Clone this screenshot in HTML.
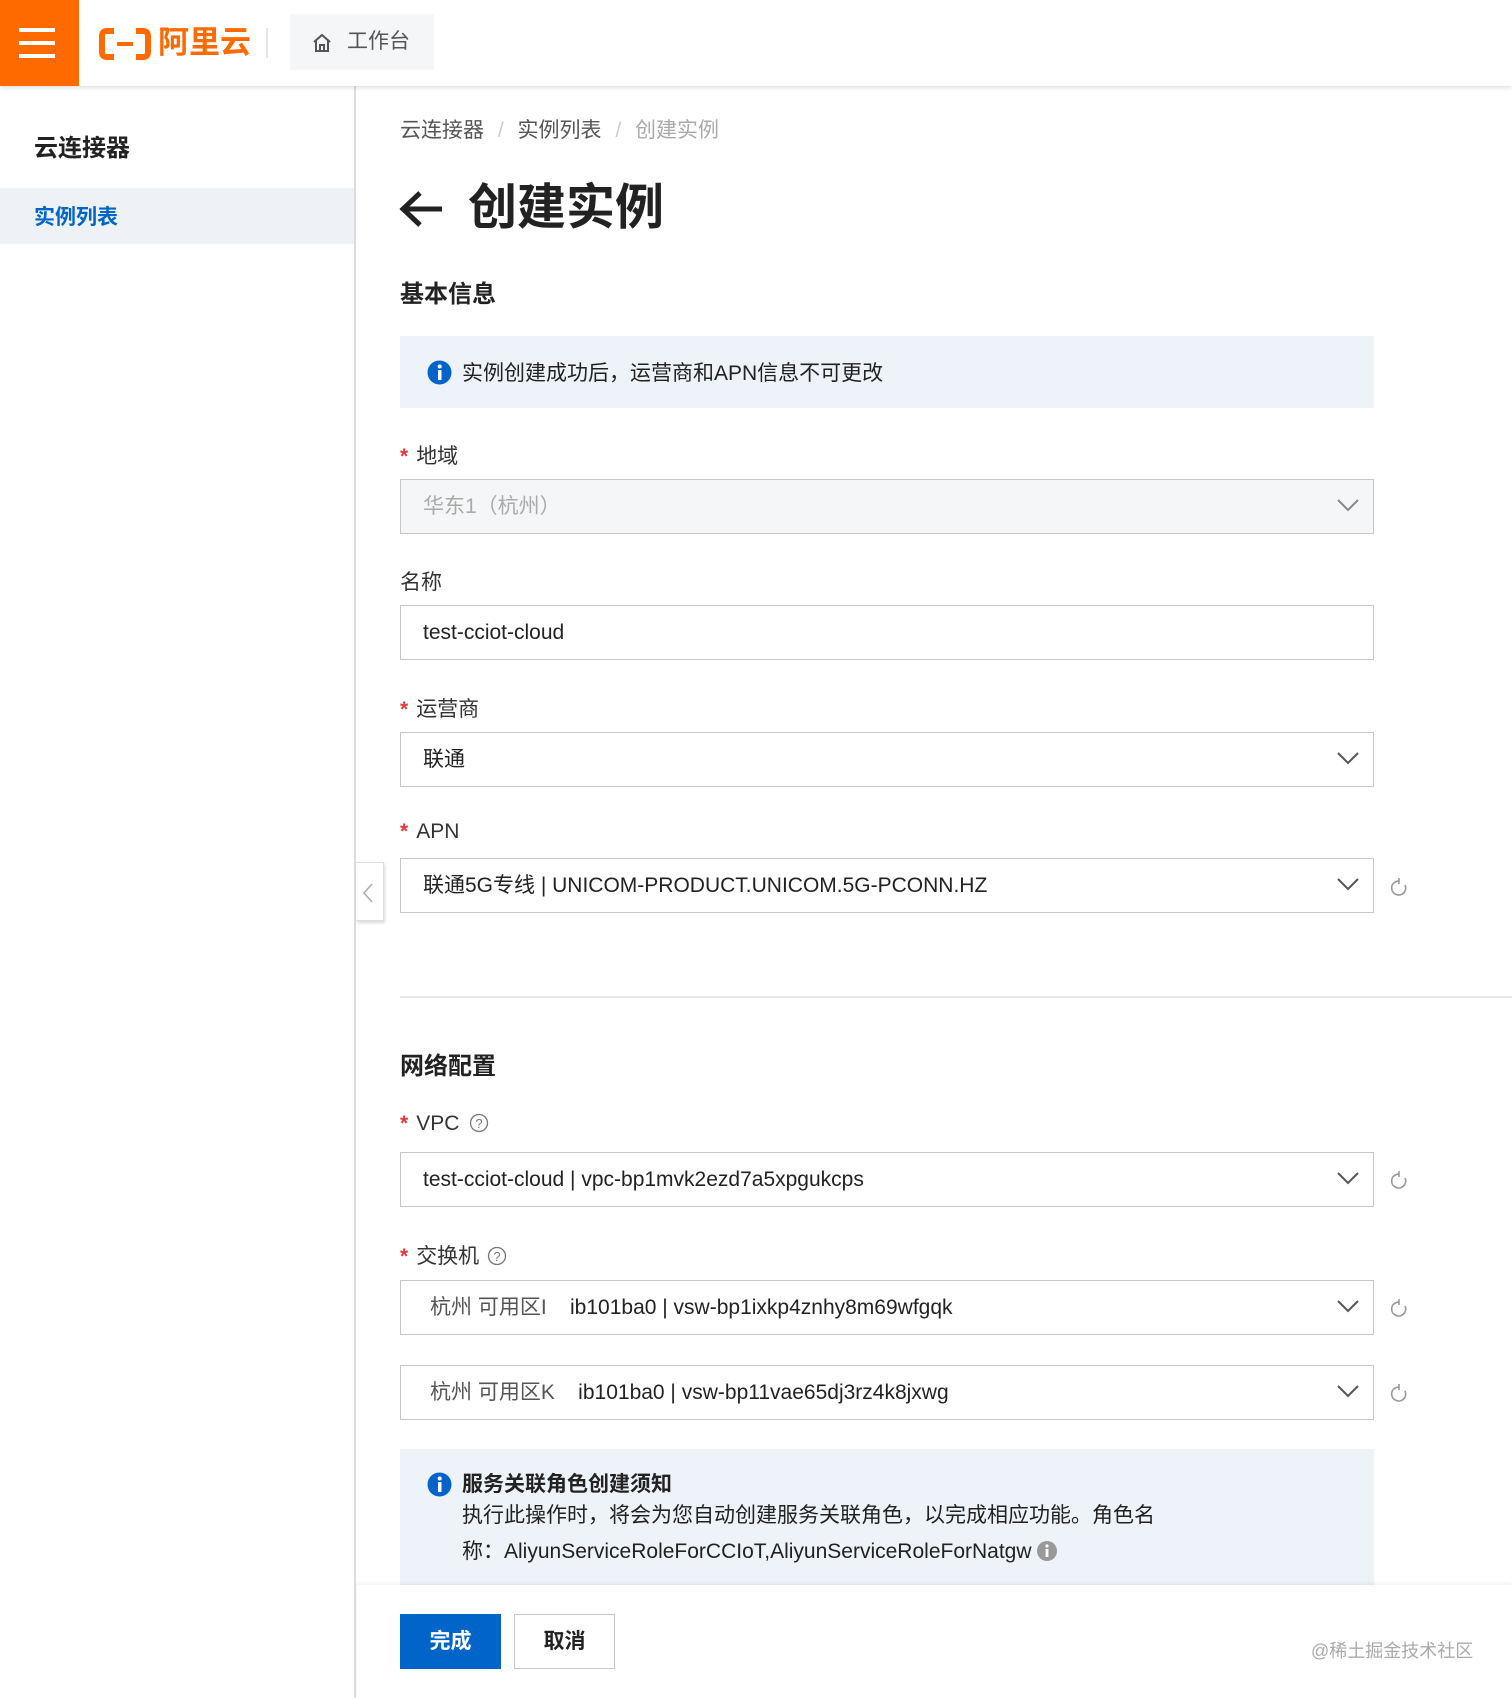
<!DOCTYPE html>
<html><head><meta charset="utf-8"><style>
*{margin:0;padding:0;box-sizing:border-box}
body{width:1512px;height:1698px;position:relative;overflow:hidden;background:#fff;font-family:"Liberation Sans","Noto Sans CJK SC",sans-serif;color:#333}
.a{position:absolute}
.hdr{left:0;top:0;width:1512px;height:86px;background:#fff;box-shadow:0 2px 4px rgba(0,0,0,.12);z-index:2}
.burg{left:0;top:0;width:79px;height:86px;background:#ff6a00}
.burg i{position:absolute;left:19px;width:36px;height:4px;background:#fff}
.side{left:0;top:86px;width:356px;height:1612px;border-right:2px solid #ddd}
.lbl{font-size:21px;color:#333;left:400px}
.lbl b{color:#e4393c;font-weight:bold;margin-right:8px}
.sel{left:400px;width:974px;height:55px;border:1px solid #c4c6cc;background:#fff;font-size:21px;line-height:53px;padding-left:22px;color:#222}
.sel svg{position:absolute;right:14px;top:18px}
.ref{left:1390px}
.h2{left:400px;font-size:24px;font-weight:bold;color:#222}
</style></head><body>
<div class="a hdr">
 <div class="a burg"><i style="top:28px"></i><i style="top:41px"></i><i style="top:54px"></i></div>
 <svg class="a" style="left:99px;top:28px" width="52" height="32" viewBox="0 0 52 32"><path d="M15 3H8Q3 3 3 8V24Q3 29 8 29H15M37 3H44Q49 3 49 8V24Q49 29 44 29H37" fill="none" stroke="#ff6a00" stroke-width="6"/><rect x="18" y="14" width="16" height="4" fill="#ff6a00"/></svg>
 <div class="a" style="left:158px;top:23px;font-size:31px;font-weight:bold;color:#ff6a00;line-height:40px">阿里云</div>
 <div class="a" style="left:266px;top:28px;width:2px;height:30px;background:#e5e5e5"></div>
 <div class="a" style="left:290px;top:14px;width:144px;height:56px;background:#f5f6f7"></div>
 <svg class="a" style="left:311px;top:32px" width="22" height="22" viewBox="0 0 22 22"><path d="M3 10L11 3L19 10M5 8V19H17V8M9 19V13H13V19" fill="none" stroke="#555" stroke-width="2"/></svg>
 <div class="a" style="left:347px;top:28px;font-size:21px;color:#555;line-height:28px">工作台</div>
</div>
<div class="a side">
 <div class="a" style="left:34px;top:42px;font-size:24px;font-weight:bold;color:#222">云连接器</div>
 <div class="a" style="left:0;top:102px;width:354px;height:56px;background:#eef2f7"></div>
 <div class="a" style="left:34px;top:115px;font-size:21px;font-weight:bold;color:#0064c8">实例列表</div>
</div>
<div class="a" style="left:356px;top:862px;width:28px;height:59px;background:#fff;border:1px solid #ddd;border-left:none;box-shadow:1px 2px 3px rgba(0,0,0,.15)"><svg class="a" style="left:6px;top:20px" width="12" height="20"><path d="M10 1L2 10L10 19" fill="none" stroke="#aaa" stroke-width="1.5"/></svg></div>
<div class="a" style="left:400px;top:114px;font-size:21px;color:#555">云连接器 <span style="color:#ccc;margin:0 8px">/</span> 实例列表 <span style="color:#ccc;margin:0 8px">/</span> <span style="color:#aaa">创建实例</span></div>
<svg class="a" style="left:398px;top:190px" width="46" height="38" viewBox="0 0 46 38"><path d="M44 19H6M22 3L5 19L22 35" fill="none" stroke="#222" stroke-width="5"/></svg>
<div class="a" style="left:468px;top:178px;font-size:49px;font-weight:bold;color:#222;line-height:60px">创建实例</div>
<div class="a h2" style="top:274px">基本信息</div>
<div class="a" style="left:400px;top:336px;width:974px;height:72px;background:#eef3f9"></div>
<svg class="a" style="left:427px;top:360px" width="25" height="25"><circle cx="12.5" cy="12.5" r="12" fill="#0064c8"/><rect x="11" y="10" width="3.5" height="10" fill="#fff"/><circle cx="12.7" cy="6.5" r="2" fill="#fff"/></svg>
<div class="a" style="left:462px;top:357px;font-size:21px;color:#222">实例创建成功后，运营商和APN信息不可更改</div>
<div class="a lbl" style="top:440px"><b>*</b>地域</div>
<div class="a sel" style="top:479px;background:#f5f6f7;color:#aaa">华东1（杭州）<svg width="22" height="14"><path d="M1 2L11 12L21 2" fill="none" stroke="#888" stroke-width="2"/></svg></div>
<div class="a lbl" style="top:566px">名称</div>
<div class="a sel" style="top:605px">test-cciot-cloud</div>
<div class="a lbl" style="top:693px"><b>*</b>运营商</div>
<div class="a sel" style="top:732px">联通<svg width="22" height="14"><path d="M1 2L11 12L21 2" fill="none" stroke="#555" stroke-width="2"/></svg></div>
<div class="a lbl" style="top:820px"><b>*</b>APN</div>
<div class="a sel" style="top:858px">联通5G专线 | UNICOM-PRODUCT.UNICOM.5G-PCONN.HZ<svg width="22" height="14"><path d="M1 2L11 12L21 2" fill="none" stroke="#555" stroke-width="2"/></svg></div>
<svg class="a ref" style="top:877px" width="18" height="20" viewBox="0 0 18 20"><path d="M9 4A7 7 0 1 0 15 8M9 1V7" fill="none" stroke="#999" stroke-width="1.6"/></svg>
<div class="a" style="left:400px;top:996px;width:1112px;height:2px;background:#e8e8e8"></div>
<div class="a h2" style="top:1046px">网络配置</div>
<div class="a lbl" style="top:1112px"><b>*</b>VPC <svg width="20" height="20" style="vertical-align:-3px;margin-left:4px"><circle cx="10" cy="10" r="8.5" fill="none" stroke="#777" stroke-width="1.3"/><text x="10" y="15" font-size="13" text-anchor="middle" fill="#777" font-family="Liberation Sans">?</text></svg></div>
<div class="a sel" style="top:1152px">test-cciot-cloud | vpc-bp1mvk2ezd7a5xpgukcps<svg width="22" height="14"><path d="M1 2L11 12L21 2" fill="none" stroke="#555" stroke-width="2"/></svg></div>
<svg class="a ref" style="top:1170px" width="18" height="20" viewBox="0 0 18 20"><path d="M9 4A7 7 0 1 0 15 8M9 1V7" fill="none" stroke="#999" stroke-width="1.6"/></svg>
<div class="a lbl" style="top:1240px"><b>*</b>交换机 <svg width="20" height="20" style="vertical-align:-3px;margin-left:2px"><circle cx="10" cy="10" r="8.5" fill="none" stroke="#777" stroke-width="1.3"/><text x="10" y="15" font-size="13" text-anchor="middle" fill="#777" font-family="Liberation Sans">?</text></svg></div>
<div class="a sel" style="top:1280px;padding-left:29px"><span style="color:#555">杭州 可用区I</span>&nbsp;&nbsp;&nbsp;&nbsp;ib101ba0 | vsw-bp1ixkp4znhy8m69wfgqk<svg width="22" height="14"><path d="M1 2L11 12L21 2" fill="none" stroke="#555" stroke-width="2"/></svg></div>
<svg class="a ref" style="top:1298px" width="18" height="20" viewBox="0 0 18 20"><path d="M9 4A7 7 0 1 0 15 8M9 1V7" fill="none" stroke="#999" stroke-width="1.6"/></svg>
<div class="a sel" style="top:1365px;padding-left:29px"><span style="color:#555">杭州 可用区K</span>&nbsp;&nbsp;&nbsp;&nbsp;ib101ba0 | vsw-bp11vae65dj3rz4k8jxwg<svg width="22" height="14"><path d="M1 2L11 12L21 2" fill="none" stroke="#555" stroke-width="2"/></svg></div>
<svg class="a ref" style="top:1383px" width="18" height="20" viewBox="0 0 18 20"><path d="M9 4A7 7 0 1 0 15 8M9 1V7" fill="none" stroke="#999" stroke-width="1.6"/></svg>
<div class="a" style="left:400px;top:1449px;width:974px;height:140px;background:#eef3f9"></div>
<svg class="a" style="left:427px;top:1472px" width="25" height="25"><circle cx="12.5" cy="12.5" r="12" fill="#0064c8"/><rect x="11" y="10" width="3.5" height="10" fill="#fff"/><circle cx="12.7" cy="6.5" r="2" fill="#fff"/></svg>
<div class="a" style="left:462px;top:1468px;font-size:21px;font-weight:bold;color:#222">服务关联角色创建须知</div>
<div class="a" style="left:462px;top:1498px;font-size:21px;color:#222;line-height:36px">执行此操作时，将会为您自动创建服务关联角色，以完成相应功能。角色名<br>称：AliyunServiceRoleForCCIoT,AliyunServiceRoleForNatgw <svg width="20" height="20" style="vertical-align:-3px"><circle cx="10" cy="10" r="10" fill="#999"/><rect x="8.6" y="8" width="2.8" height="8" fill="#fff"/><circle cx="10" cy="5" r="1.6" fill="#fff"/></svg></div>
<div class="a" style="left:357px;top:1585px;width:1155px;height:113px;background:#fff;box-shadow:0 -2px 4px rgba(0,0,0,.06)"></div>
<div class="a" style="left:400px;top:1614px;width:101px;height:55px;background:#0064c8;color:#fff;font-size:21px;font-weight:bold;text-align:center;line-height:55px">完成</div>
<div class="a" style="left:514px;top:1614px;width:101px;height:55px;border:1px solid #c4c6cc;color:#222;font-size:21px;font-weight:bold;text-align:center;line-height:53px">取消</div>
<div class="a" style="left:1311px;top:1637px;font-size:18px;color:#aaa">@稀土掘金技术社区</div>
</body></html>
